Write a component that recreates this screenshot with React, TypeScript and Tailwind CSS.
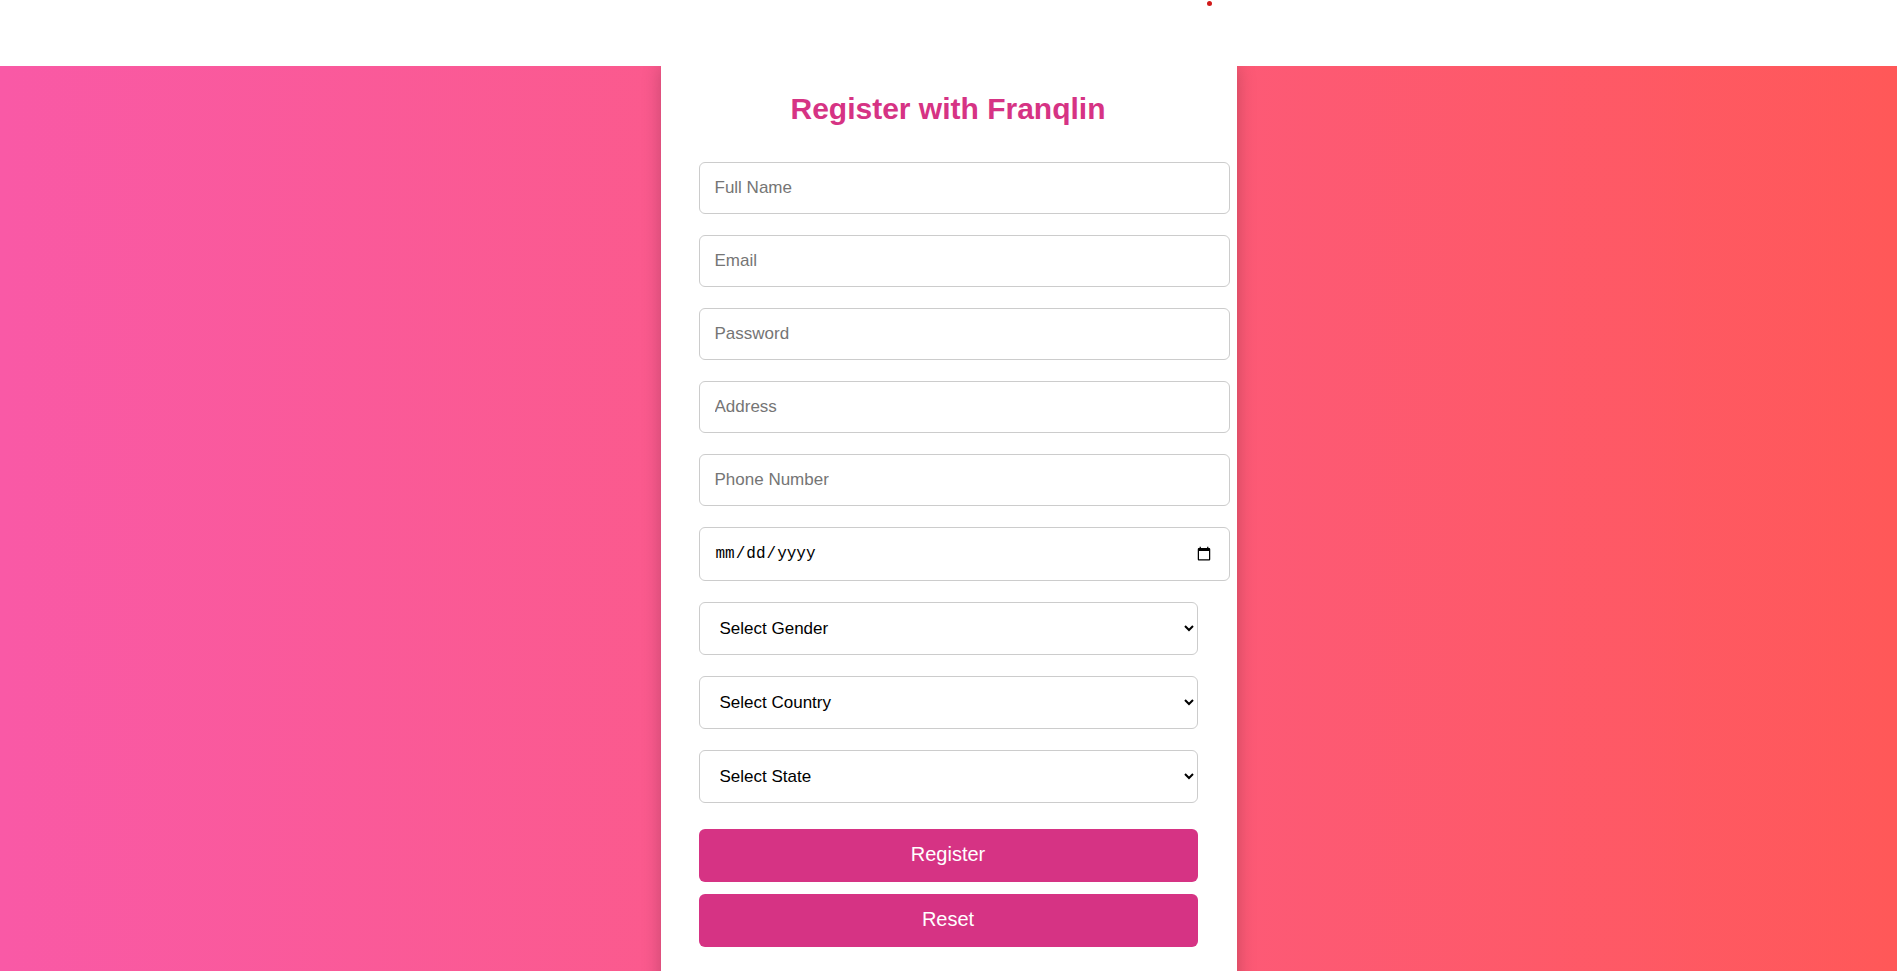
import React from "react";

const inputCls =
  "box-content block w-full h-[20px] px-[15px] py-[15px] border border-[#cccccc] rounded-[6px] text-[17px] text-black placeholder:text-[#757575] bg-white outline-none";
const selectCls =
  "block w-full h-[53px] pl-[16px] pr-[8px] border border-[#cccccc] rounded-[6px] text-[17px] text-black bg-white outline-none";
const btnCls =
  "block w-full h-[53px] rounded-[6px] bg-[#d63384] text-white text-[20px] leading-[22px] pb-[3px]";

export default function App() {
  return (
    <div className="min-h-screen bg-white" style={{ fontFamily: '"Liberation Sans", Arial, sans-serif' }}>
      <div className="relative h-[66px] bg-white">
        <div className="absolute left-[1207px] top-[1px] w-[5px] h-[5px] rounded-full bg-[#d11a1a]" />
      </div>
      <div className="flex justify-center bg-gradient-to-r from-[#f959a6] to-[#ff5858] min-h-[960px]">
        <div className="w-[576px] bg-white shadow-[0_0_18px_rgba(0,0,0,0.22)] pl-[38px] pr-[39px] pt-[26px] pb-[40px]">
          <h2 className="text-center text-[30px] leading-[34px] font-bold text-[#d63384] mb-[36px]">
            Register with Franqlin
          </h2>
          <div className="flex flex-col">
            <input className={inputCls + " mb-[21px]"} placeholder="Full Name" />
            <input className={inputCls + " mb-[21px]"} placeholder="Email" />
            <input className={inputCls + " mb-[21px]"} placeholder="Password" type="password" />
            <input className={inputCls + " mb-[21px]"} placeholder="Address" />
            <input className={inputCls + " mb-[21px]"} placeholder="Phone Number" />
            <input
              type="date"
              className="box-content block w-full h-[22px] px-[15px] py-[15px] border border-[#cccccc] rounded-[6px] text-[16px] text-black bg-white outline-none mb-[21px]"
              style={{ fontFamily: '"Liberation Mono", "DejaVu Sans Mono", monospace' }}
            />
            <select className={selectCls + " mb-[21px]"} defaultValue="">
              <option value="">Select Gender</option>
              <option>Male</option>
              <option>Female</option>
            </select>
            <select className={selectCls + " mb-[21px]"} defaultValue="">
              <option value="">Select Country</option>
            </select>
            <select className={selectCls + " mb-[26px]"} defaultValue="">
              <option value="">Select State</option>
            </select>
            <button className={btnCls + " mb-[12px]"}>Register</button>
            <button className={btnCls}>Reset</button>
          </div>
        </div>
      </div>
    </div>
  );
}
